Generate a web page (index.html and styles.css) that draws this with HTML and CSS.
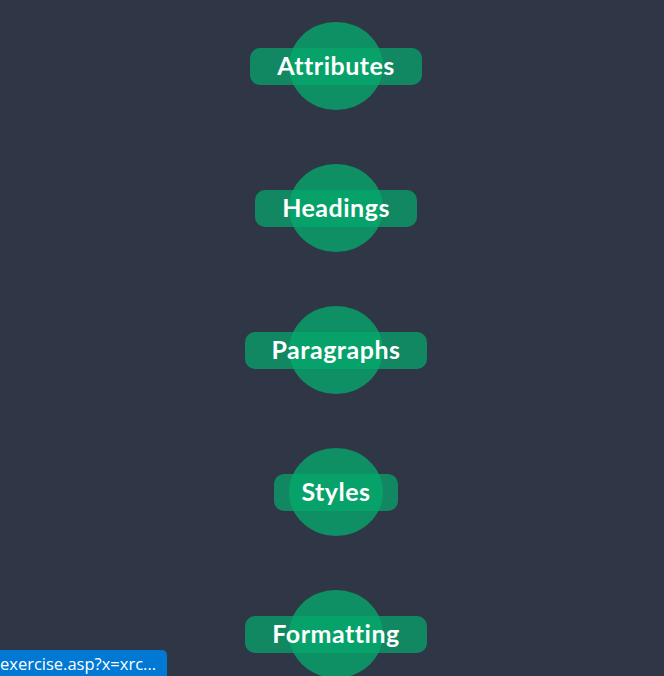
FILE: index.html
```html
<!DOCTYPE html>
<html>
<head>
<meta charset="utf-8">
<link rel="stylesheet" href="styles.css">
</head>
<body>
<div class="list">
  <div class="item"><span class="pill">Attributes</span><span class="circle"></span></div>
  <div class="item"><span class="pill">Headings</span><span class="circle"></span></div>
  <div class="item"><span class="pill">Paragraphs</span><span class="circle"></span></div>
  <div class="item"><span class="pill">Styles</span><span class="circle"></span></div>
  <div class="item"><span class="pill">Formatting</span><span class="circle"></span></div>
</div>
<div class="status">exercise.asp?x=xrc...</div>
</body>
</html>
```
FILE: styles.css
```css
html, body {
  margin: 0;
  padding: 0;
  background: #2f3747;
  height: 100%;
  overflow: hidden;
}
.list {
  display: flex;
  flex-direction: column;
  align-items: center;
  gap: 54px;
  padding-top: 22px;
  padding-left: 8px;
}
.item {
  display: grid;
  place-items: center;
  height: 88px;
  isolation: isolate;
}
.circle, .pill {
  grid-area: 1 / 1;
}
.pill {
  position: relative;
  color: #fff;
  font-family: "Lato", "Open Sans", sans-serif;
  font-weight: 700;
  font-size: 25px;
  letter-spacing: 0.5px;
  line-height: 35px;
  height: 37px;
  box-sizing: border-box;
  padding: 0 27px 2px;
}
.pill::before {
  content: "";
  position: absolute;
  inset: 0;
  border-radius: 10px;
  background: rgba(4, 170, 109, 0.7);
  z-index: -1;
}
.circle {
  width: 94px;
  height: 88px;
  border-radius: 50%;
  background: rgba(4, 170, 109, 0.77);
  position: relative;
  z-index: -1;
}
.status {
  position: fixed;
  left: 0;
  bottom: 0;
  height: 26px;
  width: 167px;
  background: #0078d4;
  color: #fff;
  font-family: "Open Sans", "Noto Sans", sans-serif;
  font-size: 16.5px;
  line-height: 28px;
  border-top-right-radius: 5px;
  white-space: nowrap;
  overflow: hidden;
}
```
